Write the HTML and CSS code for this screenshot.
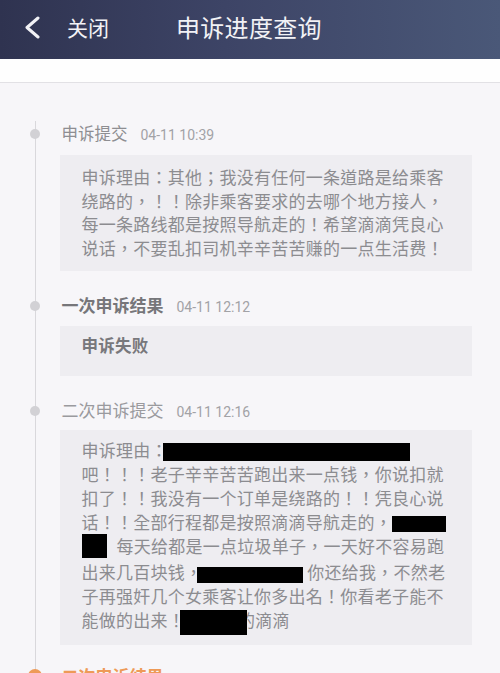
FILE: index.html
```html
<!DOCTYPE html>
<html lang="zh-CN">
<head>
<meta charset="utf-8">
<title>申诉进度查询</title>
<link rel="stylesheet" href="styles.css">
</head>
<body>
<header class="topbar">
  <svg class="back" width="16" height="24" viewBox="0 0 16 24"><polyline points="13,2 2,11.5 13,21" fill="none" stroke="#f2f2f6" stroke-width="3" stroke-linecap="round" stroke-linejoin="round"/></svg>
  <span class="close">关闭</span>
  <h1 class="title">申诉进度查询</h1>
</header>
<div class="band"></div>
<main class="timeline">
  <section class="item">
    <div class="head"><span class="dot"></span><span class="label">申诉提交</span><span class="time">04-11 10:39</span></div>
    <div class="box">申诉理由：其他；我没有任何一条道路是给乘客<br>绕路的，！！除非乘客要求的去哪个地方接人，<br>每一条路线都是按照导航走的！希望滴滴凭良心<br>说话，不要乱扣司机辛辛苦苦赚的一点生活费！</div>
  </section>
  <section class="item">
    <div class="head"><span class="dot"></span><span class="label strong">一次申诉结果</span><span class="time">04-11 12:12</span></div>
    <div class="box result">申诉失败</div>
  </section>
  <section class="item">
    <div class="head"><span class="dot"></span><span class="label light">二次申诉提交</span><span class="time">04-11 12:16</span></div>
    <div class="box tight">申诉理由：<span class="redact r1"></span><br>吧！！！老子辛辛苦苦跑出来一点钱，你说扣就<br>扣了！！我没有一个订单是绕路的！！凭良心说<br>话！！全部行程都是按照滴滴导航走的，<span class="redact r4"></span><br><span class="redact r5"></span>每天给都是一点垃圾单子，一天好不容易跑<br>出来几百块钱，<span class="redact r6"></span>你还给我，不然老<br>子再强奸几个女乘客让你多出名！你看老子能不<br>能做的出来！<span class="redact r8"></span>的滴滴</div>
  </section>
  <section class="item last">
    <div class="head"><span class="dot active"></span><span class="label orange">二次申诉结果</span></div>
  </section>
</main>
</body>
</html>
```
FILE: styles.css
```css
html, body {
  margin: 0;
  padding: 0;
}
body {
  background: #f7f6f9;
  font-family: "Noto Sans CJK SC", "Noto Sans", sans-serif;
  color: #8c8c90;
  width: 500px;
  height: 673px;
  overflow: hidden;
}
.topbar {
  height: 59px;
  display: flex;
  align-items: center;
  background: linear-gradient(90deg, #2f3350 0%, #3d4466 45%, #4a5878 100%);
  color: #f2f2f6;
  padding-left: 25px;
  box-sizing: border-box;
}
.back {
  display: block;
  margin-top: -4px;
}
.close {
  font-size: 21px;
  margin-left: 26px;
  margin-top: -6px;
}
.title {
  margin: -6px 0 0 67px;
  font-size: 24px;
  font-weight: normal;
  letter-spacing: 0.3px;
}
.band {
  height: 23px;
  background: #fefefe;
  border-bottom: 1px solid #e2e1e5;
}
.timeline {
  margin-left: 35px;
  margin-top: 38px;
  border-left: 1.5px solid #d9d8dc;
  padding-left: 23.5px;
  padding-right: 28px;
}
.item {
  margin-bottom: 22px;
}
.item.last {
  margin-top: -3px;
}
.head {
  position: relative;
  display: flex;
  align-items: baseline;
  height: 24px;
  line-height: 24px;
}
.dot {
  position: absolute;
  left: -30px;
  top: 8px;
  width: 10px;
  height: 10px;
  border-radius: 50%;
  background: #d2d1d5;
}
.dot.active {
  left: -32px;
  top: 5px;
  width: 14px;
  height: 14px;
  background: #ee9a57;
}
.label {
  font-size: 16.5px;
  color: #8e8e92;
  margin-left: 2px;
}
.label.strong {
  font-weight: bold;
  font-size: 17px;
  color: #76767a;
}
.label.light {
  font-size: 17px;
  color: #9a9a9e;
}
.label.orange {
  font-size: 17px;
  font-weight: bold;
  color: #ee9a57;
}
.time {
  font-family: "Roboto", "Noto Sans", sans-serif;
  font-size: 14px;
  color: #a2a2a6;
  margin-left: 13px;
}
.box {
  margin-top: 10px;
  background: #eeedf1;
  padding: 10px 10px 12px 22px;
  font-family: "Noto Sans CJK TC", "Noto Sans CJK SC", sans-serif;
  font-feature-settings: "locl" 0;
  font-size: 17px;
  letter-spacing: 0.25px;
  line-height: 23.6px;
  color: #8c8c90;
}
.box.result {
  margin-top: 9px;
  padding: 8px 10px 18px 22px;
  font-family: "Noto Sans CJK SC", sans-serif;
  font-weight: bold;
  font-size: 16.5px;
  color: #78787c;
}
.box.tight {
  margin-top: 8px;
  padding-top: 8px;
  padding-bottom: 10px;
  line-height: 24px;
}
.redact {
  display: inline-block;
  background: #000;
  vertical-align: middle;
  position: relative;
}
.r1 {
  width: 247px;
  height: 18px;
  margin-left: -5px;
}
.r4 {
  width: 54px;
  height: 16px;
}
.r5 {
  width: 25px;
  height: 24px;
  margin-right: 10px;
  top: -2px;
}
.r6 {
  width: 106px;
  height: 16px;
  margin-left: -5px;
  margin-right: 4px;
}
.r8 {
  width: 67px;
  height: 25px;
  margin-left: -5px;
  margin-right: -9px;
  z-index: 1;
}
```
